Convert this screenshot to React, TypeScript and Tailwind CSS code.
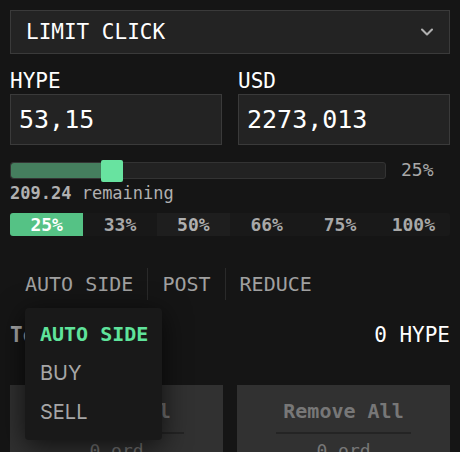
import { ChevronDown } from "lucide-react";

const mono = "font-['DejaVu_Sans_Mono','Liberation_Mono',monospace]";

const presets = [
  { label: "25%", bg: "bg-[#55c285] text-white rounded-l-[3px]" },
  { label: "33%", bg: "bg-[#181818] text-[#a8a8a8]" },
  { label: "50%", bg: "bg-[#1e1e1e] text-[#b0b0b0]" },
  { label: "66%", bg: "bg-[#191919] text-[#a8a8a8]" },
  { label: "75%", bg: "bg-[#191919] text-[#a8a8a8]" },
  { label: "100%", bg: "bg-[#191919] text-[#a8a8a8] rounded-r-[3px]" },
];

const SideMenu = () => (
  <div className="absolute left-[15px] top-[40px] z-10 w-[137px] rounded-[4px] bg-[#191919] pt-[7px] pb-[8px] pl-[15px] shadow-[0_6px_28px_rgba(0,0,0,0.7)]">
    <div className={`${mono} h-[39px] text-[20px] leading-[39px] font-bold text-[#5fe39b]`}>AUTO SIDE</div>
    <div className="h-[39px] font-['Inter','Noto_Sans',sans-serif] text-[20px] leading-[39px] text-[#a6a6a6]">BUY</div>
    <div className="h-[39px] font-['Inter','Noto_Sans',sans-serif] text-[20px] leading-[39px] text-[#a6a6a6]">SELL</div>
  </div>
);

const BulkButton = ({ title }: { title: string }) => (
  <div className="flex h-[80px] flex-col items-center bg-[#313131] pt-[13px]">
    <div className={`${mono} text-[20px] leading-[26px] font-bold text-[#777]`}>{title}</div>
    <div className="mt-[8px] h-[2px] w-[135px] bg-[#242424]" />
    <div className={`${mono} mt-[6px] text-[18px] leading-[22px] text-[#777]`}>0 ord</div>
  </div>
);

export default function App() {
  return (
    <div className={`${mono} h-[452px] w-[460px] overflow-hidden bg-[#151515] px-[10px] pt-[10px]`}>
      <div className="flex h-[44px] items-center justify-between border border-[#3a3a3a] bg-[#232323] pl-[15px] pr-[12px]">
        <span className="text-[21px] leading-[26px] text-white">LIMIT CLICK</span>
        <ChevronDown className="h-[20px] w-[20px] text-[#b0b0b0]" strokeWidth={2.5} />
      </div>

      <div className="mt-[14px] grid grid-cols-2 gap-[16px]">
        {[
          ["HYPE", "53,15"],
          ["USD", "2273,013"],
        ].map(([label, value]) => (
          <div key={label}>
            <div className="text-[21px] leading-[26px] text-white">{label}</div>
            <div className="flex h-[51px] items-center border border-[#3a3a3a] bg-[#232323] pl-[8px]">
              <span className="text-[25px] leading-[30px] text-white">{value}</span>
            </div>
          </div>
        ))}
      </div>

      <div className="mt-[14px] flex h-[22px] items-center">
        <div className="relative h-[17px] w-[376px] rounded-[3px] border border-[#333] bg-[#222]">
          <div className="h-full w-[91px] rounded-l-[3px] bg-[#457e5e]" />
          <div className="absolute left-[90px] top-[-3px] h-[22px] w-[22px] rounded-[2px] bg-[#68e3a0]" />
        </div>
        <span className="ml-[15px] text-[18px] leading-[22px] text-[#a8a8a8]">25%</span>
      </div>

      <div className="mt-[2px] text-[17px] leading-[20px] text-[#b0b0b0]">
        <span className="font-bold">209.24</span> remaining
      </div>

      <div className="mt-[10px] grid h-[23px] grid-cols-6 rounded-[3px] bg-[#191919]">
        {presets.map((p) => (
          <div key={p.label} className={`flex items-center justify-center text-[18px] leading-[22px] font-bold ${p.bg}`}>
            {p.label}
          </div>
        ))}
      </div>

      <div className="mt-[32px] flex h-[32px] items-stretch text-[20px] text-[#a0a0a0]">
        <div className="relative flex items-center pl-[15px] pr-[14px]">
          AUTO SIDE
          <SideMenu />
        </div>
        <div className="w-px bg-[#2a2a2a]" />
        <div className="flex items-center px-[14px]">POST</div>
        <div className="w-px bg-[#2a2a2a]" />
        <div className="flex items-center px-[14px]">REDUCE</div>
      </div>

      <div className="mt-[22px] flex items-center justify-between">
        <span className="text-[21px] leading-[26px] font-bold text-[#a8a8a8]">Total</span>
        <span className="text-[21px] leading-[26px] text-white">0 HYPE</span>
      </div>

      <div className="mt-[37px] grid grid-cols-2 gap-[14px]">
        <BulkButton title="Close All" />
        <BulkButton title="Remove All" />
      </div>
    </div>
  );
}
